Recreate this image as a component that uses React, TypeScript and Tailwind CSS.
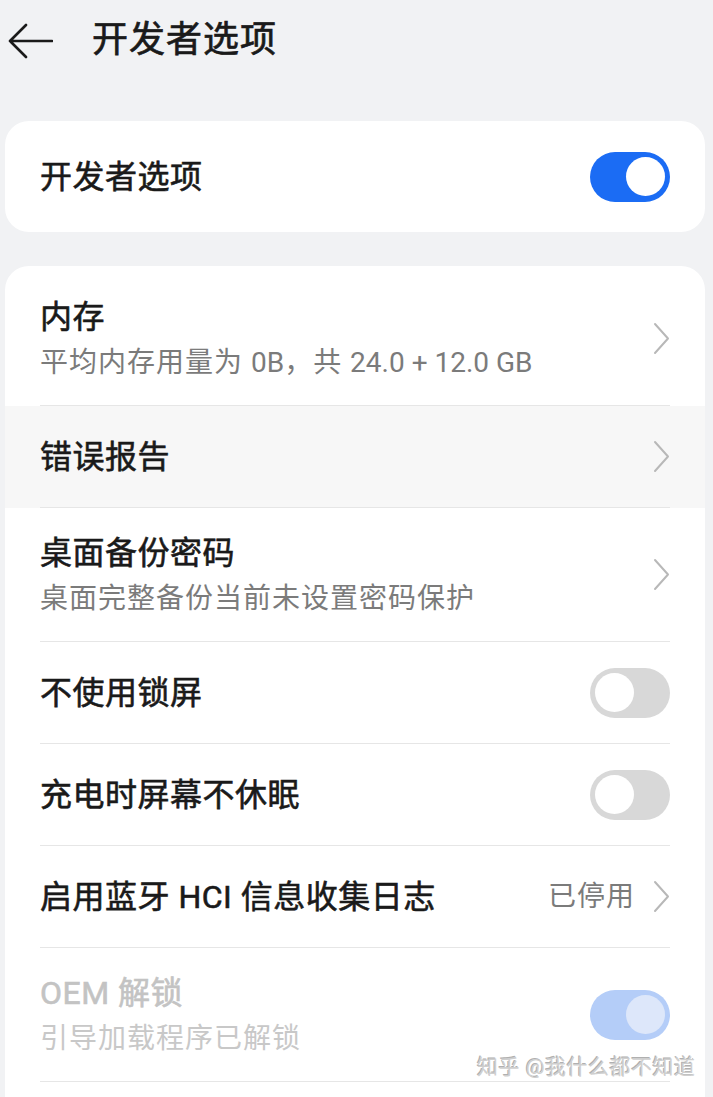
import React from "react";

const FONT = { fontFamily: 'Roboto, "Noto Sans CJK SC", "Noto Sans", sans-serif' };

function Toggle({ on, disabled }: { on: boolean; disabled?: boolean }) {
  const track = disabled ? "bg-[#b4cdf8]" : on ? "bg-[#1b6cf4]" : "bg-[#d8d8d8]";
  const knob = disabled ? "bg-[#dde7fa]" : "bg-white";
  return (
    <div className={`w-[80px] h-[50px] rounded-full flex items-center px-[5px] shrink-0 ${track} ${on ? "justify-end" : "justify-start"}`}>
      <div className={`w-[39px] h-[39px] rounded-full ${knob}`} />
    </div>
  );
}

function Chevron() {
  return (
    <svg width="17" height="33" viewBox="0 0 17 33" className="shrink-0">
      <path d="M2 2 L15 16.5 L2 31" fill="none" stroke="#b8b8b8" strokeWidth="2" strokeLinecap="round" strokeLinejoin="round" />
    </svg>
  );
}

const TITLE = "text-[32px] leading-[46px] font-normal tracking-[0.5px] [-webkit-text-stroke:0.6px_currentColor]";

function Row({
  title,
  sub,
  right,
  highlight,
  disabled,
  last,
}: {
  title: React.ReactNode;
  sub?: React.ReactNode;
  right: React.ReactNode;
  highlight?: boolean;
  disabled?: boolean;
  last?: boolean;
}) {
  return (
    <div className={highlight ? "bg-[#f7f7f7]" : ""}>
      <div
        className={`mx-[35px] flex items-center justify-between ${sub ? "h-[134px]" : "h-[102px]"} ${last ? "" : "border-b border-[#e6e6e6]"}`}
      >
        <div className="flex flex-col">
          <div className={`${TITLE} ${disabled ? "text-[#c3c3c3]" : "text-[#1a1a1a]"}`}>{title}</div>
          {sub && (
            <div className={`text-[28px] leading-[40px] tracking-[1px] mt-[3px] ${disabled ? "text-[#c8c8c8]" : "text-[#7b7b7b]"}`}>
              {sub}
            </div>
          )}
        </div>
        {right}
      </div>
    </div>
  );
}

export default function App() {
  return (
    <div className="relative w-[713px] h-[1097px] overflow-hidden bg-[#f1f2f4]" style={FONT}>
      <div className="h-[80px] flex items-center">
        <svg width="46" height="36" viewBox="0 0 46 36" className="ml-[7px] mt-[1px]">
          <path d="M45 18 H3 M19 2 L3 18 L19 34" fill="none" stroke="#1a1a1a" strokeWidth="2.6" strokeLinecap="round" strokeLinejoin="round" />
        </svg>
        <div className="ml-[39px] text-[36px] leading-[44px] font-normal tracking-[1px] text-[#1a1a1a] [-webkit-text-stroke:0.7px_currentColor]">
          开发者选项
        </div>
      </div>

      <div className="mt-[41px] ml-[5px] mr-[8px] h-[111px] rounded-[24px] bg-white px-[35px] flex items-center justify-between">
        <div className={`${TITLE} text-[#1a1a1a]`}>开发者选项</div>
        <Toggle on />
      </div>

      <div className="mt-[34px] ml-[5px] mr-[8px] rounded-t-[24px] bg-white pt-[6px] pb-[40px]">
        <Row
          title="内存"
          sub={
            <>
              平均内存用量为 <span className="tracking-[0px]">0B</span>，共{" "}
              <span className="tracking-[0px]">24.0 + 12.0 GB</span>
            </>
          }
          right={<Chevron />}
        />
        <Row title="错误报告" right={<Chevron />} highlight />
        <Row title="桌面备份密码" sub="桌面完整备份当前未设置密码保护" right={<Chevron />} />
        <Row title="不使用锁屏" right={<Toggle on={false} />} />
        <Row title="充电时屏幕不休眠" right={<Toggle on={false} />} />
        <Row
          title="启用蓝牙 HCI 信息收集日志"
          right={
            <div className="flex items-center gap-[18px]">
              <span className="text-[28px] tracking-[1px] text-[#7b7b7b]">已停用</span>
              <Chevron />
            </div>
          }
        />
        <Row title="OEM 解锁" sub="引导加载程序已解锁" right={<Toggle on disabled />} disabled />
      </div>

      <div
        className="absolute left-[477px] top-[1051px] text-[21px] leading-[32px] text-[#cfcfcf] tracking-[0.5px]"
        style={{ textShadow: "1px 1px 0 #ffffff, -1px -1px 0 #b0b0b0" }}
      >
        知乎 @我什么都不知道
      </div>
    </div>
  );
}
